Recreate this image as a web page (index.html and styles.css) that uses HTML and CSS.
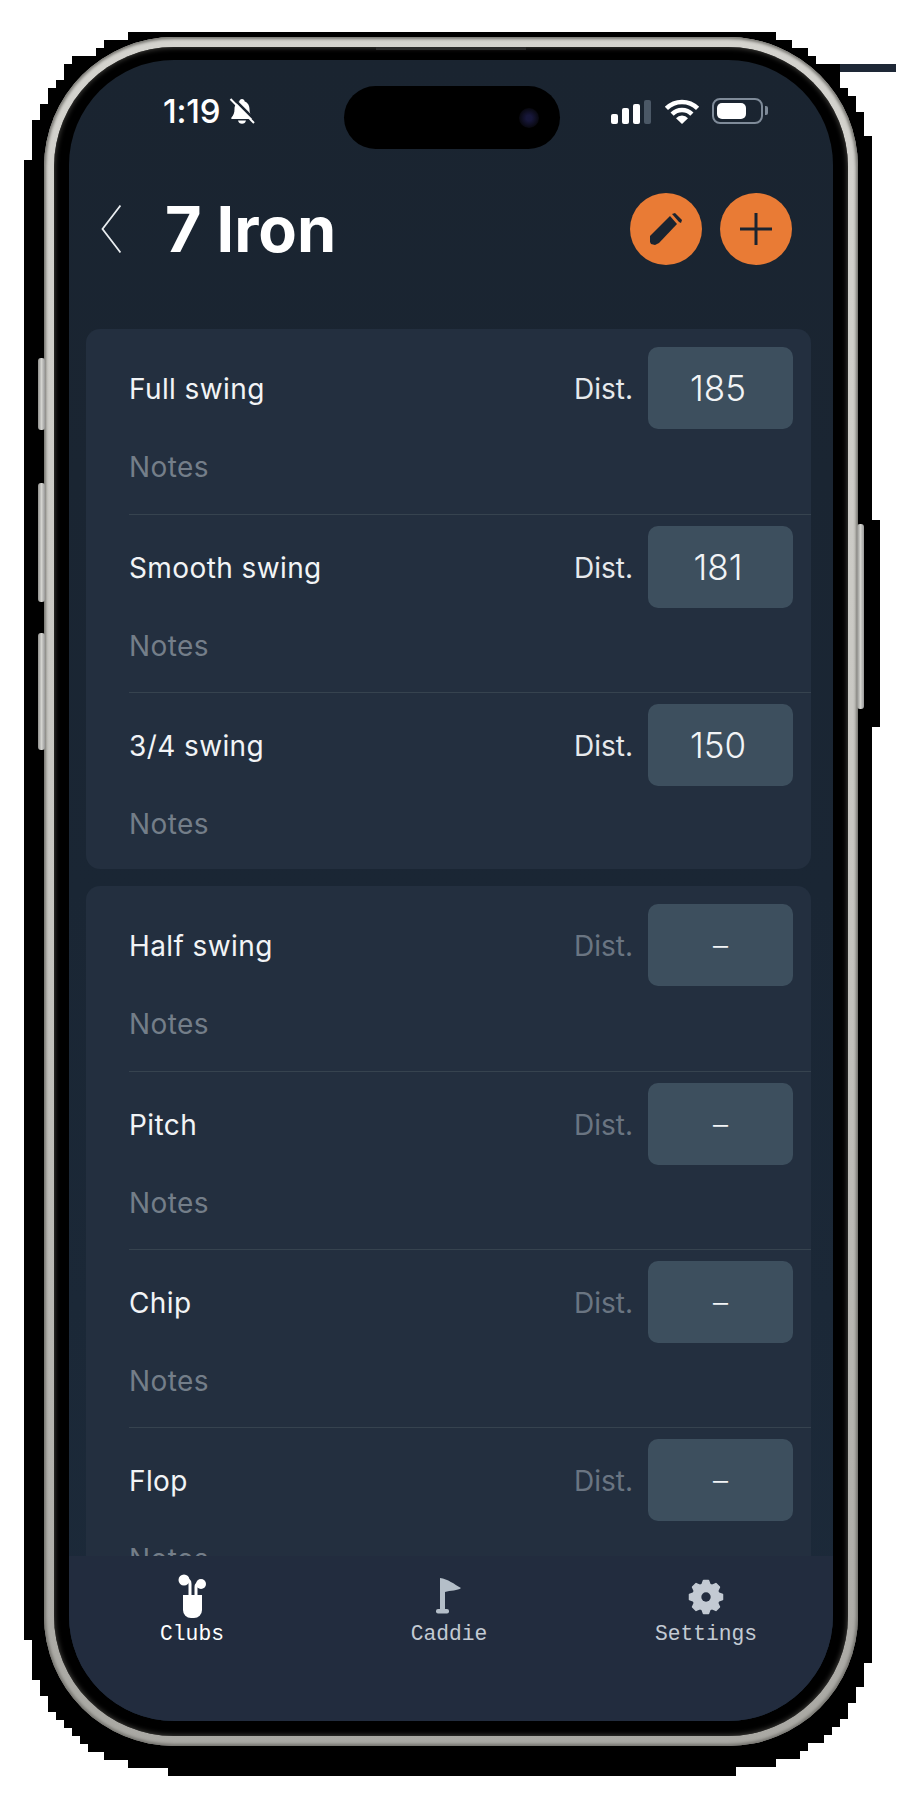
FILE: index.html
```html
<!DOCTYPE html>
<html lang="en">
<head>
  <meta charset="UTF-8">
  <title>7 Iron</title>
  <link rel="stylesheet" href="styles.css">
</head>
<body>
  <div class="glitch-bar"></div>
  <div class="phone-shadow">
    <div class="phone-frame">
      <div class="btn-side btn-mute"></div>
      <div class="btn-side btn-up"></div>
      <div class="btn-side btn-down"></div>
      <div class="btn-side btn-power"></div>
      <div class="speaker"></div>
      <div class="bezel">
        <div class="screen">
          <div class="island"><span class="lens"></span></div>

          <div class="status">
            <div class="status-left">
              <span class="time">1:19</span>
              <svg class="bell" viewBox="0 0 26 26" width="26" height="26">
                <path d="M13 1c-1.500 0-2.500 1-2.700 2.500C6.800 4.800 5.500 8 5.500 11c0 4-1 6-3 8.500-.6.800-.2 1.500.8 1.500h19.400c1 0 1.400-.7.800-1.500-2-2.500-3-4.500-3-8.500 0-3-1.300-6.200-4.800-7.500C15.500 2 14.500 1 13 1z" fill="#fff"/>
                <path d="M9 22.500h8c-.3 2-2 3.300-4 3.300s-3.700-1.300-4-3.300z" fill="#fff"/>
                <path d="M4.500 0.500 L26.500 22.500" stroke="#1a2430" stroke-width="2.500"/>
                <path d="M1.500 1 L25 25" stroke="#fff" stroke-width="2"/>
              </svg>
            </div>
            <div class="status-right">
              <div class="signal">
                <span class="bar bar1"></span>
                <span class="bar bar2"></span>
                <span class="bar bar3"></span>
                <span class="bar bar4"></span>
              </div>
              <svg class="wifi" viewBox="0 0 36 26" width="36" height="26">
                <path d="M2.400 10.400A22 22 0 0 1 33.600 10.400" fill="none" stroke="#fff" stroke-width="4.500"/>
                <path d="M8.100 16.100A14 14 0 0 1 27.900 16.100" fill="none" stroke="#fff" stroke-width="4.500"/>
                <path d="M18 26L12 20.300A8 8 0 0 1 24 20.300Z" fill="#fff"/>
              </svg>
              <div class="battery"><span class="battery-fill"></span></div>
            </div>
          </div>

          <div class="header">
            <svg class="back" viewBox="0 0 20 48" width="20" height="48">
              <path d="M19.500 0.500L1.500 24L19.500 47.500" fill="none" stroke="#e8ecef" stroke-width="1.800"/>
            </svg>
            <h1 class="title">7 Iron</h1>
            <div class="round-btn">
              <svg viewBox="0 0 32 32" width="32" height="32">
                <path d="M0 23L20 3L27 11L9 30L5 32L1 31L0 29Z" fill="#1a2430"/>
                <path d="M22 1L25 0L32 7L31 10L29 9Z" fill="#1a2430"/>
              </svg>
            </div>
            <div class="round-btn">
              <svg viewBox="0 0 32 32" width="32" height="32">
                <path d="M0 16H32M16 0V32" stroke="#1a2430" stroke-width="3"/>
              </svg>
            </div>
          </div>

          <div class="scroll">
            <div class="card">
              <div class="row">
                <div class="row-top">
                  <span class="row-name">Full swing</span>
                  <span class="dist">Dist.</span>
                  <span class="dist-box">185</span>
                </div>
                <div class="notes">Notes</div>
              </div>
              <div class="row">
                <div class="row-top">
                  <span class="row-name">Smooth swing</span>
                  <span class="dist">Dist.</span>
                  <span class="dist-box">181</span>
                </div>
                <div class="notes">Notes</div>
              </div>
              <div class="row">
                <div class="row-top">
                  <span class="row-name">3/4 swing</span>
                  <span class="dist">Dist.</span>
                  <span class="dist-box">150</span>
                </div>
                <div class="notes">Notes</div>
              </div>
            </div>

            <div class="card">
              <div class="row">
                <div class="row-top">
                  <span class="row-name">Half swing</span>
                  <span class="dist dim">Dist.</span>
                  <span class="dist-box empty">–</span>
                </div>
                <div class="notes">Notes</div>
              </div>
              <div class="row">
                <div class="row-top">
                  <span class="row-name">Pitch</span>
                  <span class="dist dim">Dist.</span>
                  <span class="dist-box empty">–</span>
                </div>
                <div class="notes">Notes</div>
              </div>
              <div class="row">
                <div class="row-top">
                  <span class="row-name">Chip</span>
                  <span class="dist dim">Dist.</span>
                  <span class="dist-box empty">–</span>
                </div>
                <div class="notes">Notes</div>
              </div>
              <div class="row">
                <div class="row-top">
                  <span class="row-name">Flop</span>
                  <span class="dist dim">Dist.</span>
                  <span class="dist-box empty">–</span>
                </div>
                <div class="notes">Notes</div>
              </div>
            </div>
          </div>

          <div class="tabbar">
            <div class="tab active">
              <svg viewBox="0 0 30 46" width="30" height="46">
                <path d="M7 6H10Q13 6 13 10V22" fill="none" stroke="#fff" stroke-width="3"/>
                <path d="M24 10H21Q19 10 19 13V22" fill="none" stroke="#fff" stroke-width="3"/>
                <circle cx="7" cy="6" r="5.500" fill="#fff"/>
                <circle cx="24" cy="10" r="5" fill="#fff"/>
                <path d="M6 21H25V36A8 8 0 0 1 17 44H14A8 8 0 0 1 6 36Z" fill="#fff"/>
              </svg>
              <span class="tab-label">Clubs</span>
            </div>
            <div class="tab">
              <svg viewBox="0 0 30 46" width="30" height="46">
                <path d="M6 4C14 5 20 10 27 14C24 17 16 16 11 18V36H6Z" fill="#b4bec8"/>
                <rect x="2" y="35" width="13" height="4.500" rx="2" fill="#b4bec8"/>
              </svg>
              <span class="tab-label">Caddie</span>
            </div>
            <div class="tab">
              <svg viewBox="0 0 36 46" width="36" height="46">
                <g fill="#c3cad3" stroke="#c3cad3" stroke-width="1.500" stroke-linejoin="round">
                  <circle cx="18" cy="23" r="13"/>
                  <polygon points="13.500,12 15.500,6.500 20.500,6.500 22.500,12"/>
                  <polygon points="13.500,12 15.500,6.500 20.500,6.500 22.500,12" transform="rotate(45 18 23)"/>
                  <polygon points="13.500,12 15.500,6.500 20.500,6.500 22.500,12" transform="rotate(90 18 23)"/>
                  <polygon points="13.500,12 15.500,6.500 20.500,6.500 22.500,12" transform="rotate(135 18 23)"/>
                  <polygon points="13.500,12 15.500,6.500 20.500,6.500 22.500,12" transform="rotate(180 18 23)"/>
                  <polygon points="13.500,12 15.500,6.500 20.500,6.500 22.500,12" transform="rotate(225 18 23)"/>
                  <polygon points="13.500,12 15.500,6.500 20.500,6.500 22.500,12" transform="rotate(270 18 23)"/>
                  <polygon points="13.500,12 15.500,6.500 20.500,6.500 22.500,12" transform="rotate(315 18 23)"/>
                </g>
                <circle cx="18" cy="23" r="4.700" fill="#222c3e"/>
              </svg>
              <span class="tab-label">Settings</span>
            </div>
          </div>
        </div>
      </div>
    </div>
  </div>
</body>
</html>
```

FILE: styles.css
```css
* { box-sizing: border-box; }

body {
  margin: 0;
  background: #fff;
  font-family: Inter, "Liberation Sans", sans-serif;
  position: relative;
}

.glitch-bar {
  position: absolute;
  top: 64px;
  right: 1px;
  width: 64px;
  height: 8px;
  background: #1e2836;
}

/* stair-stepped black matte behind the phone, with the bulge by the power button */
.phone-shadow {
  margin: 32px 17px 19px 24px;
  height: 1744px;
  padding: 5px 22px 0 20px;
  background: #000;
  clip-path: polygon(
    0 128px, 8px 128px, 8px 88px, 16px 88px, 16px 72px, 24px 72px, 24px 56px, 32px 56px,
    32px 48px, 40px 48px, 40px 32px, 48px 32px, 48px 24px, 72px 24px, 72px 16px, 80px 16px,
    80px 8px, 104px 8px, 104px 0,
    752px 0, 752px 8px, 768px 8px, 768px 16px, 784px 16px, 784px 24px, 792px 24px, 792px 32px,
    816px 32px, 816px 56px, 824px 56px, 824px 64px, 832px 64px, 832px 80px, 840px 80px,
    840px 104px, 848px 104px,
    848px 488px, 856px 488px, 856px 695px, 848px 695px,
    848px 1631px, 840px 1631px, 840px 1655px, 832px 1655px, 832px 1671px, 824px 1671px,
    824px 1687px, 816px 1687px, 816px 1695px, 808px 1695px, 808px 1703px, 800px 1703px,
    800px 1711px, 784px 1711px, 784px 1719px, 776px 1719px, 776px 1727px, 752px 1727px,
    752px 1735px, 712px 1735px, 712px 1744px,
    144px 1744px, 144px 1736px, 104px 1736px, 104px 1728px, 80px 1728px, 80px 1720px,
    64px 1720px, 64px 1712px, 56px 1712px, 56px 1704px, 48px 1704px, 48px 1696px, 40px 1696px,
    40px 1688px, 32px 1688px, 32px 1680px, 24px 1680px, 24px 1664px, 16px 1664px, 16px 1648px,
    8px 1648px, 8px 1608px, 0 1608px
  );
}

.phone-frame {
  position: relative;
  padding: 10px;
  border-radius: 130px;
  background: linear-gradient(#d4d3ce, #c6c5c0 50%, #a9a8a3);
  box-shadow: inset 0 0 3px 2px #767570;
}

.btn-side {
  position: absolute;
  width: 7px;
  background: linear-gradient(90deg, #8f8f8c, #d4d4d0 50%, #999);
  border-radius: 3px;
}
.btn-mute { left: -6px; top: 321px; height: 72px; }
.btn-up { left: -6px; top: 446px; height: 119px; }
.btn-down { left: -6px; top: 596px; height: 117px; }
.btn-power { right: -6px; top: 487px; height: 185px; }

.speaker {
  position: absolute;
  top: 10px;
  left: 332px;
  width: 150px;
  height: 3px;
  background: #2a2a2a;
}

.bezel {
  padding: 13px 15px 15px;
  background: #000;
  border-radius: 120px;
  box-shadow: inset 0 0 5px 1px #3d3c39;
}

.screen {
  position: relative;
  display: flex;
  flex-direction: column;
  height: 1661px;
  overflow: hidden;
  border-radius: 105px;
  background: linear-gradient(#1a2430, #1a2634 50%, #1c2a3a);
}

.island {
  position: absolute;
  top: 26px;
  left: 275px;
  width: 216px;
  height: 63px;
  border-radius: 32px;
  background: #000;
}

.lens {
  position: absolute;
  top: 22px;
  left: 175px;
  width: 20px;
  height: 20px;
  border-radius: 50%;
  background: radial-gradient(#17173a 20%, #08080f 70%);
}

/* status bar */
.status {
  display: flex;
  justify-content: space-between;
  align-items: center;
  height: 90px;
  padding: 12px 70px 0 94px;
  color: #fff;
}

.status-left, .status-right { display: flex; align-items: center; }
.status-left { gap: 9px; }

.time {
  font-size: 33px;
  font-weight: 500;
  line-height: 26px;
  letter-spacing: -0.2px;
}

.signal {
  display: flex;
  align-items: flex-end;
  gap: 3.500px;
  height: 25px;
  margin-right: 13px;
}

.bar { width: 7.500px; border-radius: 2px; background: #fff; }
.bar1 { height: 10px; }
.bar2 { height: 16px; }
.bar3 { height: 20px; }
.bar4 { height: 24px; background: #4b5866; }

.wifi { margin-right: 12px; }

.battery {
  position: relative;
  width: 51px;
  height: 26px;
  padding: 3px;
  border: 2px solid #7f8b99;
  border-radius: 8px;
}

.battery::after {
  content: "";
  position: absolute;
  right: -7px;
  top: 6px;
  width: 3px;
  height: 9px;
  border-radius: 0 2px 2px 0;
  background: #7f8b99;
}

.battery-fill {
  display: block;
  width: 29px;
  height: 16px;
  border-radius: 5px;
  background: #fff;
}

/* header */
.header {
  display: flex;
  align-items: center;
  height: 179px;
  padding: 0 41px 21px 32px;
}

.back { margin-right: 44px; }

.title {
  flex: 1;
  margin: 0;
  color: #fff;
  font-size: 63px;
  font-weight: 700;
  line-height: 72px;
}

.round-btn {
  display: flex;
  align-items: center;
  justify-content: center;
  width: 72px;
  height: 72px;
  margin-left: 18px;
  border-radius: 50%;
  background: #e97b35;
}

/* list */
.scroll {
  flex: 1;
  min-height: 0;
  overflow: hidden;
  padding: 0 22px 0 17px;
}

.card {
  margin-bottom: 17px;
  padding-top: 7px;
  border-radius: 14px;
  background: #232f3f;
}

.row {
  height: 178px;
  padding-top: 11px;
  margin-left: 43px;
  border-top: 1px solid #36434f;
}

.row:first-child { border-top: 0; }
.row:last-child { height: 177px; }

.row-top {
  display: flex;
  align-items: center;
  height: 82px;
  padding-right: 18px;
}

.row-name {
  flex: 1;
  padding-top: 2px;
  color: #f2f4f6;
  font-size: 28px;
  letter-spacing: 0.4px;
}

.dist {
  margin-right: 15px;
  padding-top: 2px;
  color: #e6e9ec;
  font-size: 28px;
}

.dist.dim { color: #6a7582; }

.dist-box {
  width: 145px;
  height: 82px;
  padding-right: 5px;
  border-radius: 10px;
  background: #3d4f5e;
  color: #f2f4f6;
  font-size: 35px;
  font-weight: 300;
  line-height: 82px;
  text-align: center;
}

.dist-box.empty { padding-right: 0; font-size: 30px; }

.notes {
  margin-top: 20px;
  color: #747e89;
  font-size: 28px;
  letter-spacing: 0.4px;
  line-height: 36px;
}

/* tab bar */
.tabbar {
  display: flex;
  justify-content: center;
  height: 165px;
  padding: 18px 4px 0 0;
  background: #222c3e;
}

.tab {
  display: flex;
  flex: none;
  flex-direction: column;
  align-items: center;
  width: 257px;
  color: #c3cad3;
}

.tab.active { color: #fff; }

.tab-label {
  font-family: "Liberation Mono", monospace;
  font-size: 21.300px;
  line-height: 24px;
  margin-top: 2px;
}
```
